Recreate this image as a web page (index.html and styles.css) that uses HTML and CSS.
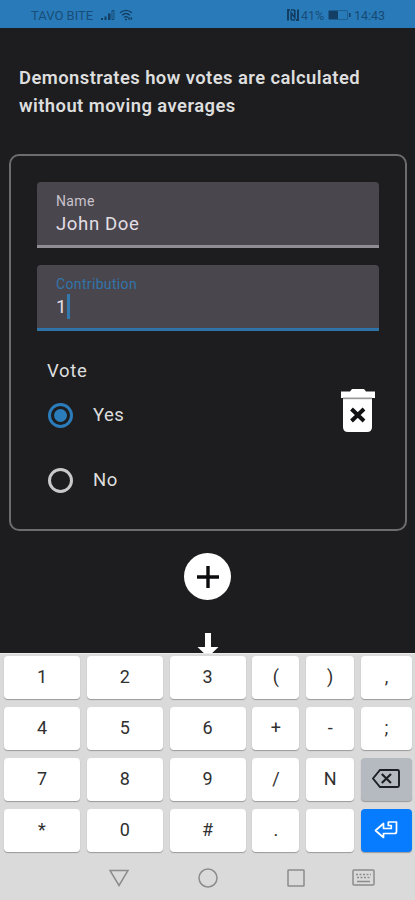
FILE: index.html
```html
<!DOCTYPE html>
<html lang="en">
<head>
<meta charset="utf-8">
<title>Votes</title>
<link rel="stylesheet" href="styles.css">
</head>
<body>
<div class="screen">
  <header class="status">
    <span class="carrier">TAVO BITE</span>
    <svg class="signal" width="14" height="12" viewBox="0 0 14 12"><path d="M0 9h2v2H0zM3.500 7.500h2V11h-2zM7 4.500h2.500V11H7z" fill="currentColor"/><path d="M11 1.500h2v9h-2z" fill="none" stroke="currentColor" stroke-width=".8"/></svg>
    <svg class="wifi" width="14" height="12" viewBox="0 0 14 12" fill="none" stroke="currentColor" stroke-width="1.300"><path d="M1 3.800Q7-1.200 13 3.800M3 6.200Q7 2.800 11 6.200M5 8.500Q7 6.800 9 8.500"/><path d="M6 10.500h2M10 8.300v2.500M12.300 8.300v2.500" stroke-width="1.500"/></svg>
    <span class="spacer"></span>
    <svg class="nfc" width="12" height="12" viewBox="0 0 12 12" fill="none" stroke="currentColor"><path d="M3 1H1v10.500M9 11H11V.5" stroke-width="2"/><path d="M4.200 11V4l3.600 4.500V1M4 1h3.800M4.200 11H8" stroke-width="1.700"/></svg>
    <span class="percent">41%</span>
    <svg class="battery" width="23" height="10" viewBox="0 0 23 10"><rect x=".5" y=".5" width="19" height="9" rx="1" fill="none" stroke="currentColor" stroke-opacity=".45"/><path d="M1 1h9v8H1zM21 3h1.500v4H21z" fill="currentColor"/></svg>
    <span class="clock">14:43</span>
  </header>
  <main class="content">
    <h1 class="title">Demonstrates how votes are calculated<br>without moving averages</h1>
    <section class="card">
      <div class="field">
        <span class="label">Name</span>
        <span class="value">John Doe</span>
      </div>
      <div class="field focused">
        <span class="label">Contribution</span>
        <span class="value">1<i class="caret"></i></span>
      </div>
      <div class="vote">Vote</div>
      <div class="choices">
        <div class="options">
          <div class="option"><span class="radio on"></span><span>Yes</span></div>
          <div class="option"><span class="radio"></span><span>No</span></div>
        </div>
        <svg class="trash" width="34" height="44" viewBox="0 0 34 44"><path d="M0 2.500h9L11 0h12l2 2.500h9V9H0z" fill="#fff"/><path d="M2 9h29v29q0 5-5 5H7q-5 0-5-5z" fill="#fff"/><path d="M2 8.500h29v1.700H2z" fill="#999"/><path d="M10.500 20l12.500 12M23 20L10.500 32" stroke="#111113" stroke-width="4" fill="none"/></svg>
      </div>
    </section>
    <div class="add"><svg width="24" height="24" viewBox="0 0 24 24"><path d="M12 1v22M1 12h22" stroke="#0c0c0e" stroke-width="3.400"/></svg></div>
    <svg class="down" width="22" height="24" viewBox="0 0 22 24"><path d="M8 0h6v14h7.500L11 24 .5 14H8z" fill="#fff"/></svg>
  </main>
  <div class="keyboard">
    <div class="keys">
      <span class="key">1</span><span class="key">2</span><span class="key">3</span><span class="key">(</span><span class="key">)</span><span class="key">,</span>
      <span class="key">4</span><span class="key">5</span><span class="key">6</span><span class="key">+</span><span class="key">-</span><span class="key">;</span>
      <span class="key">7</span><span class="key">8</span><span class="key">9</span><span class="key">/</span><span class="key">N</span>
      <span class="key erase"><svg width="28" height="19" viewBox="0 0 28 19" fill="none" stroke="#1c2024"><path d="M8 1h17.500q1.500 0 1.500 1.500v14q0 1.500-1.500 1.500H8L1 9.500z" stroke-width="1.900"/><path d="M9.800 5l9.200 9M19 5l-9.200 9" stroke-width="2.200"/></svg></span>
      <span class="key">*</span><span class="key">0</span><span class="key">#</span><span class="key">.</span><span class="key"></span>
      <span class="key enter"><svg width="24" height="20" viewBox="0 0 24 20" fill="none" stroke="#fff" stroke-width="1.700" stroke-linejoin="round"><path d="M1.500 10.500L9.500 3.500v5h7.800V5.500h-3V2H22.500v9.500q0 2-2 2h-11v4z"/></svg></span>
    </div>
    <nav class="nav">
      <svg width="20" height="18" viewBox="0 0 20 18"><path d="M1 1.500h18L10 16.500z"/></svg>
      <svg width="20" height="20" viewBox="0 0 20 20"><circle cx="10" cy="10" r="9"/></svg>
      <svg width="18" height="18" viewBox="0 0 18 18"><rect x="1" y="1" width="16" height="16" rx=".5"/></svg>
      <svg width="23" height="17" viewBox="0 0 23 17"><rect x="1" y="1" width="21" height="15" rx="1"/><path d="M4 5.500h15M5 8.500h13" stroke-dasharray="2 1.500"/><path d="M5 12.500h13"/></svg>
    </nav>
  </div>
</div>
</body>
</html>
```
FILE: styles.css
```css
* { box-sizing: border-box; }
body { margin: 0; background: #1d1d1f; font-family: Roboto, "Liberation Sans", sans-serif; }
.screen { width: 415px; height: 900px; display: flex; flex-direction: column; overflow: hidden; }
.status { flex: none; height: 28px; background: #297ab9; color: #123f63; display: flex; align-items: center; padding: 2px 29px 0 31px; font-size: 13px; white-space: nowrap; }
.status svg { flex: none; }
.carrier { width: 62px; opacity: .75; }
.signal { margin-left: 8px; }
.wifi { margin-left: 4px; }
.spacer { flex: 1; }
.percent { width: 24px; margin-left: 2px; opacity: .75; font-size: 12.5px; }
.battery { margin-left: 3px; }
.clock { width: 32px; margin-left: 3px; opacity: .8; font-size: 12.5px; }
.content { height: 625px; flex: none; display: flex; flex-direction: column; align-items: center; overflow: hidden; }
.title { flex: none; margin: 0; align-self: stretch; padding: 36px 0 0 19px; height: 126px; font-size: 18.4px; line-height: 28px; font-weight: 600; letter-spacing: .44px; color: #dedede; white-space: nowrap; }
.card { flex: none; align-self: flex-start; width: 398px; height: 377px; margin-left: 9px; border: 2px solid #6c6c6e; border-radius: 10px; padding: 26px 26px 0; }
.field { height: 66px; margin-bottom: 17px; background: #4a464e; border-bottom: 3px solid #918d95; border-radius: 4px 4px 0 0; padding: 10px 19px 0; display: flex; flex-direction: column; }
.field.focused { margin-bottom: 0; border-bottom-color: #2f74a9; }
.label { font-size: 14px; line-height: 18px; letter-spacing: .35px; color: #c8c3cb; }
.focused .label { color: #3175aa; }
.value { display: flex; align-items: center; height: 27px; font-size: 18.6px; letter-spacing: .6px; color: #e2dfe4; }
.caret { width: 3px; height: 25px; background: #3279b0; }
.vote { padding-left: 10px; margin-top: 26px; font-size: 18.5px; line-height: 28px; letter-spacing: .7px; color: #dedede; }
.choices { display: flex; justify-content: space-between; padding: 4px 4px 0 11px; }
.option { display: flex; align-items: center; height: 52px; margin-bottom: 13px; gap: 20px; font-size: 18.5px; letter-spacing: .5px; color: #dedede; }
.radio { width: 25px; height: 25px; border: 3px solid #c9c9c9; border-radius: 50%; display: grid; place-items: center; }
.radio.on { border-color: #2b7cbb; }
.radio.on::after { content: ""; width: 13px; height: 13px; border-radius: 50%; background: #2b7cbb; }
.trash { flex: none; }
.add { flex: none; width: 47px; height: 47px; margin-top: 22px; border-radius: 50%; background: #fff; display: grid; place-items: center; }
.down { flex: none; margin-top: 33px; }
.keyboard { flex: 1; background: #dadada; border-top: 1px solid #ececec; padding: 2px 3px 0 4px; display: flex; flex-direction: column; }
.keys { display: grid; grid-template-columns: 76px 76px 76px 47px 48px 51px; grid-template-rows: repeat(4, 43px); column-gap: 6.8px; row-gap: 8px; }
.key { display: grid; place-items: center; padding-bottom: 2px; background: #fff; border-radius: 4px; box-shadow: 0 1px 1px #999; color: #303030; font-size: 18px; }
.erase { background: #b4babf; }
.enter { background: #087cff; }
.nav { display: flex; align-items: center; padding: 0 35px 0 105px; height: 51px; }
.nav svg { flex: none; fill: none; stroke: #8c8c8c; stroke-width: 1.5; }
.nav svg:nth-child(2) { margin-left: 69px; }
.nav svg:nth-child(3) { margin-left: 69px; }
.nav svg:nth-child(4) { margin-left: 47px; }
```
